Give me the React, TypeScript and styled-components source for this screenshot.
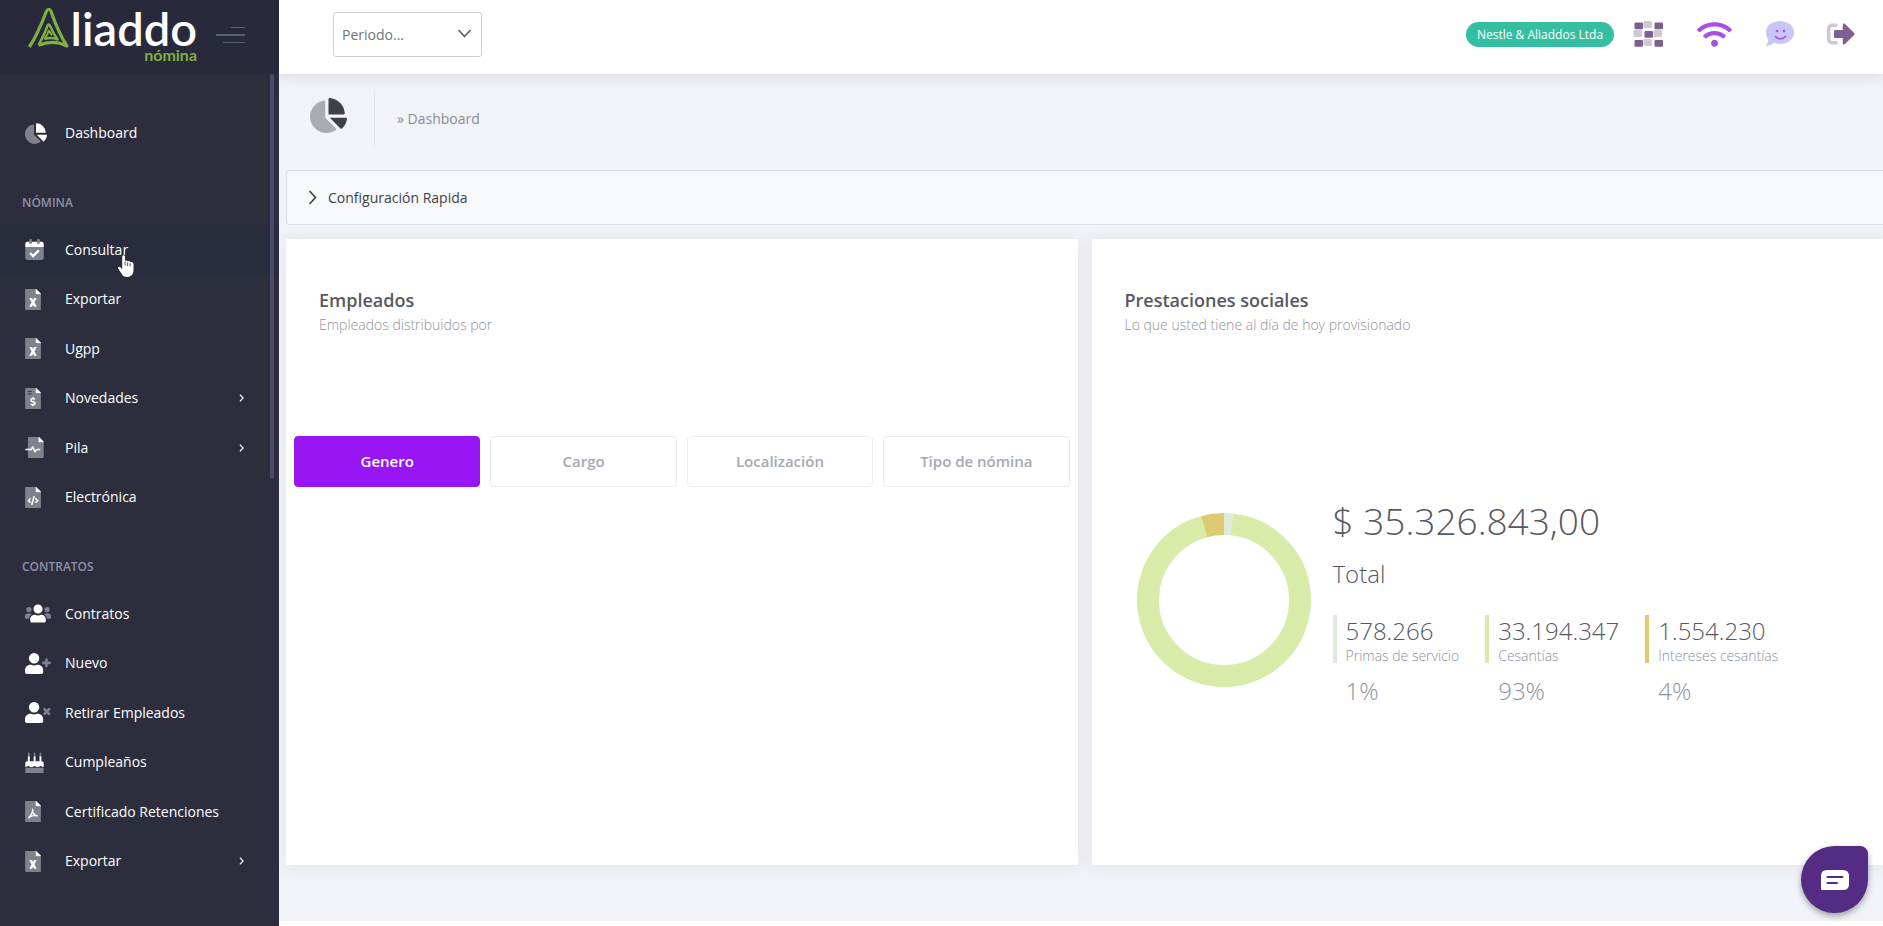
import React from "react";
import styled, { createGlobalStyle, css } from "styled-components";
import { FaCode, FaDollarSign, FaWifi } from "react-icons/fa";

const GlobalStyle = createGlobalStyle`
  *, *::before, *::after { box-sizing: border-box; }
  body {
    margin: 0;
    background: #f2f3f8;
    color: #575962;
    font-family: "Open Sans", "Noto Sans", sans-serif;
    font-size: 14px;
    line-height: 20px;
  }
  button, select { font-family: inherit; }
  ul { list-style: none; margin: 0; padding: 0; }
  h2, h3, p, dl, dd { margin: 0; font-weight: inherit; }
  a { color: inherit; text-decoration: none; }
`;

/* ---------- layout ---------- */

const Page = styled.div`
  display: grid;
  grid-template-columns: 279px minmax(0, 1fr);
  min-height: 100vh;
`;

const Sidebar = styled.aside`
  position: relative;
  display: flex;
  flex-direction: column;
  background: #2c2e3e;
  color: #fff;
`;

const Brand = styled.div`
  display: flex;
  align-items: flex-start;
  height: 74px;
  padding: 6px 34px 0 27px;
  background: #282a3c;
`;

const BrandLink = styled.a`
  display: flex;
  align-items: flex-start;
`;

const BrandText = styled.span`
  display: flex;
  flex-direction: column;
  align-items: flex-end;
  width: 127px;
  font-family: Lato, sans-serif;
`;

const BrandName = styled.span`
  font-size: 47px;
  line-height: 44px;
  font-weight: 600;
  color: #fff;
`;

const BrandProduct = styled.span`
  font-size: 16px;
  line-height: 10px;
  font-weight: 700;
  color: #7fae42;
`;

const MenuToggle = styled.button`
  display: flex;
  flex-direction: column;
  align-items: flex-end;
  gap: 6px;
  margin: 21px 0 0 auto;
  padding: 0;
  border: 0;
  background: none;
`;

const ToggleBar = styled.span<{ $width: number; $thick?: boolean }>`
  width: ${(p) => p.$width}px;
  height: ${(p) => (p.$thick ? 2 : 1)}px;
  background: #5d5f72;
`;

const ScrollThumb = styled.span`
  position: absolute;
  z-index: 1;
  top: 74px;
  right: 5px;
  width: 4px;
  height: 405px;
  border-radius: 4px;
  background: #4b4b68;
`;

const Nav = styled.nav`
  display: flex;
  flex-direction: column;
  padding-top: 34px;
`;

const NavSection = styled.h3`
  margin-top: 34px;
  padding: 2px 22px 0;
  height: 33px;
  font-size: 12px;
  line-height: 18px;
  font-weight: 600;
  color: #8d91a8;
`;

const NavList = styled.ul<{ $height: number }>`
  display: grid;
  grid-auto-rows: 1fr;
  height: ${(p) => p.$height}px;
`;

const NavItem = styled.li`
  position: relative;
  display: flex;
`;

const NavLink = styled.a<{ $active?: boolean }>`
  flex: 1;
  display: flex;
  align-items: center;
  padding: 0 35px 0 25px;
  color: #fff;
  ${(p) =>
    p.$active &&
    css`
      background: #292c3d;
    `}
`;

const NavIcon = styled.span`
  display: flex;
  width: 40px;
`;

const NavLabel = styled.span`
  flex: 1;
`;

const Pointer = styled.svg`
  position: absolute;
  left: 117px;
  top: 30px;
`;

const Main = styled.div`
  display: flex;
  flex-direction: column;
`;

const TopBar = styled.header`
  display: flex;
  justify-content: space-between;
  align-items: flex-start;
  height: 74px;
  padding: 12px 28px 0 54px;
  background: #fff;
  box-shadow: 0 1px 15px 1px rgba(69, 65, 78, 0.14);
`;

const PeriodBox = styled.div`
  position: relative;
  display: flex;
`;

const PeriodSelect = styled.select`
  appearance: none;
  width: 149px;
  height: 45px;
  padding: 0 8px;
  border: 1px solid #cdced2;
  border-radius: 3px;
  background: #fff;
  color: #6c757d;
  font-size: 14px;
`;

const PeriodArrow = styled.svg`
  position: absolute;
  right: 10px;
  top: 16px;
  pointer-events: none;
`;

const Tools = styled.div`
  display: flex;
  align-items: center;
  height: 44px;
`;

const Company = styled.span`
  margin-right: 19px;
  width: 148px;
  border-radius: 13px;
  background: #34bfa3;
  color: #fff;
  font-size: 12px;
  line-height: 25px;
  text-align: center;
`;

const ToolGroup = styled.div`
  display: flex;
  align-items: center;
  gap: 33px;
`;

const ToolButton = styled.button`
  display: flex;
  padding: 0;
  border: 0;
  background: none;
  color: #a94fe8;
`;

const SubHeader = styled.div`
  display: flex;
  align-items: center;
  padding: 17px 31px 24px;
`;

const SubIcon = styled.span`
  display: flex;
  width: 65px;
  height: 55px;
  padding-top: 7px;
  border-right: 1px solid #e4e5eb;
`;

const Crumb = styled.a`
  margin-left: 22px;
  color: #898b96;
`;

const Content = styled.main`
  padding: 0 0 56px 7px;
`;

const QuickConfig = styled.button`
  display: flex;
  align-items: center;
  gap: 11px;
  width: 100%;
  height: 55px;
  padding: 0 21px;
  border: 1px solid #dcdee6;
  border-right: 0;
  border-radius: 4px 0 0 4px;
  background: #f7f8fa;
  color: #3f4047;
  font-size: 14px;
  font-weight: 500;
`;

const Panels = styled.div`
  display: grid;
  grid-template-columns: 1fr 1fr;
  gap: 14px;
  margin-top: 14px;
  min-height: 626px;
`;

const Panel = styled.section`
  padding: 51px 8px 0;
  background: #fff;
  box-shadow: 0 1px 15px 1px rgba(69, 65, 78, 0.08);
`;

const PanelHead = styled.div`
  padding: 0 25px;
`;

const PanelTitle = styled.h2`
  font-size: 18px;
  line-height: 20px;
  font-weight: 600;
`;

const PanelNote = styled.p`
  margin-top: 5px;
  font-weight: 300;
  font-size: 14px;
  line-height: 20px;
  color: #8f929d;
`;

const Tabs = styled.div`
  display: grid;
  grid-template-columns: repeat(4, 1fr);
  gap: 10px;
  margin-top: 101px;
`;

const Tab = styled.button<{ $active?: boolean }>`
  height: 51px;
  padding: 0 0 2px;
  border: 1px solid ${(p) => (p.$active ? "#9816f4" : "#ebedf2")};
  border-radius: 4px;
  background: ${(p) => (p.$active ? "#9816f4" : "#fff")};
  color: ${(p) => (p.$active ? "#fff" : "#a6a8b3")};
  font-size: 15px;
  font-weight: 600;
`;

const Summary = styled.div`
  display: flex;
  align-items: center;
  gap: 22px;
  margin-top: 158px;
  padding-left: 37px;
`;

const SummaryBody = styled.div`
  display: flex;
  flex-direction: column;
  font-weight: 300;
`;

const Amount = styled.p`
  font-size: 37px;
  line-height: 56px;
`;

const AmountLabel = styled.p`
  margin-top: 5px;
  font-size: 24px;
  line-height: 40px;
`;

const Stats = styled.dl`
  display: flex;
  gap: 26px;
  margin-top: 21px;
`;

const Stat = styled.div`
  display: flex;
  flex-direction: column;
`;

const StatMain = styled.div<{ $color: string }>`
  display: flex;
  flex-direction: column-reverse;
  justify-content: flex-end;
  height: 48px;
  padding-left: 9px;
  border-left: 4px solid ${(p) => p.$color};
`;

const StatValue = styled.dd`
  font-size: 24px;
  line-height: 32px;
`;

const StatLabel = styled.dt`
  font-size: 14px;
  line-height: 18px;
  color: #8f929d;
`;

const StatShare = styled.dd`
  margin-top: 12px;
  padding-left: 13px;
  font-size: 24px;
  line-height: 32px;
  color: #8f929d;
`;

const Footer = styled.footer`
  flex: 1;
  min-height: 5px;
  background: #fff;
`;

const ChatButton = styled.button`
  position: fixed;
  right: 15px;
  bottom: 13px;
  display: flex;
  align-items: center;
  justify-content: center;
  width: 67px;
  height: 67px;
  padding: 0;
  border: 0;
  border-radius: 34px 8px 34px 34px;
  background: #552c84;
  box-shadow: 0 3px 6px rgba(0, 0, 0, 0.35);
`;

/* ---------- icons ---------- */

const SOFT = "#7f818c";

const Logo = () => (
  <svg width="43" height="42" viewBox="0 0 43 42" fill="none" stroke="#7fae42" strokeLinejoin="round" aria-hidden="true">
    <path d="M2.300 41C9 31 15 17 19.300 5.500q2.400-4.500 4.800 0C28 17 33.500 30 40 40 31 35.300 21 35.400 11.500 39.300" strokeWidth="3.200" />
    <path d="M11.500 39C15.500 32 18.500 25.500 20.300 20q1.400-3 2.800 0C25 25 27.300 29 30.500 33.500 26.500 31.600 22 31.700 17.500 33" strokeWidth="2.500" />
    <path d="M17.500 33C19.500 30 21 27.500 21.800 24.800 23 26.500 23.800 27.600 25.200 29" strokeWidth="2" />
  </svg>
);

const PIE_BODY =
  "M224 288V50.710c0-9.550-8.390-17.400-17.840-16.060C86.990 51.490-4.100 155.600.140 280.370 4.500 408.510 114.830 513.590 243.030 511.980c50.400-.630 96.970-16.870 135.260-44.030 7.900-5.600 8.420-17.230 1.570-24.080L224 288z";
const PIE_SLICES =
  "M527.790 288H290.500l158.030 158.030c6.040 6.040 15.980 6.530 22.190.680 38.700-36.460 65.320-85.610 73.130-140.860 1.340-9.460-6.510-17.850-16.060-17.850zM511.960 223.200C503.720 103.740 408.260 8.280 288.800.040 279.680-.590 272 7.100 272 16.240V240h223.770c9.140 0 16.820-7.680 16.190-16.800z";

const PieIcon = ({ size, body, slices }: { size: number; body: string; slices: string }) => (
  <svg height={size} width={Math.round((size * 544) / 512)} viewBox="0 0 544 512" aria-hidden="true">
    <path fill={body} d={PIE_BODY} />
    <path fill={slices} d={PIE_SLICES} />
  </svg>
);

const FileIcon = ({ children }: { children?: React.ReactNode }) => (
  <svg width="16" height="21" viewBox="0 0 384 512" fill="none" aria-hidden="true">
    <path fill={SOFT} d="M256 0H24C10.700 0 0 10.700 0 24v464c0 13.300 10.700 24 24 24h336c13.300 0 24-10.700 24-24V128H256z" />
    <path fill="#fff" d="M384 128H256V0c6 0 14 0 23 7l98 98c5 5 7 11 7 23z" />
    {children}
  </svg>
);

const ExcelIcon = () => (
  <FileIcon>
    <path fill="#fff" d="M100 222h68l24 54 24-54h68l-58 104 58 104h-68l-24-54-24 54h-68l58-104z" />
  </FileIcon>
);

const InvoiceIcon = () => (
  <FileIcon>
    <path stroke="#2c2e3e" strokeWidth="22" d="M64 84h96M64 146h96" />
    <FaDollarSign x="72" y="214" size="240" color="#fff" />
  </FileIcon>
);

const CodeIcon = () => (
  <FileIcon>
    <FaCode x="52" y="190" size="280" color="#fff" />
  </FileIcon>
);

const PdfIcon = () => (
  <FileIcon>
    <path stroke="#fff" strokeWidth="34" strokeLinecap="round" d="M184 200c8 70-22 130-92 210M184 250c16 60 50 104 110 112M112 386c50-26 110-36 180-26" />
  </FileIcon>
);

const PulseIcon = () => (
  <svg width="19" height="21" viewBox="0 0 448 512" fill="none" aria-hidden="true">
    <path fill={SOFT} d="M320 0H88C75 0 64 11 64 24v464c0 13 11 24 24 24h336c13 0 24-11 24-24V128H320z" />
    <path fill="#fff" d="M448 128H320V0c6 0 14 0 23 7l98 98c5 5 7 11 7 23z" />
    <path stroke="#fff" strokeWidth="34" strokeLinejoin="round" d="M0 304h144l36-64 56 124 42-60h88" />
  </svg>
);

const CalendarIcon = () => (
  <svg width="19" height="21" viewBox="0 0 448 512" fill="none" aria-hidden="true">
    <path fill={SOFT} d="M0 192h448v272c0 26-22 48-48 48H48c-26 0-48-22-48-48zM96 12q0-12 12-12h40q12 0 12 12v90H96zM288 12q0-12 12-12h40q12 0 12 12v90h-64z" />
    <path fill="#fff" d="M448 112v80H0v-80c0-26 22-48 48-48h48v48h64V64h128v48h64V64h48c26 0 48 22 48 48z" />
    <path stroke="#fff" strokeWidth="58" d="M118 344l72 72 140-138" />
  </svg>
);

const USER_BODY =
  "M224 256a128 128 0 1 0 0-256 128 128 0 1 0 0 256zM313.600 288h-16.700c-22.200 10.200-46.900 16-72.900 16s-50.600-5.800-72.900-16h-16.700C60.200 288 0 348.200 0 422.400V464c0 26.500 21.500 48 48 48h352c26.500 0 48-21.500 48-48v-41.600c0-74.200-60.200-134.400-134.400-134.400z";

const UserIcon = ({ mark }: { mark: string }) => (
  <svg width="26" height="21" viewBox="0 0 640 512" aria-hidden="true">
    <path fill="#fff" d={USER_BODY} />
    <path fill="none" stroke={SOFT} strokeWidth="64" strokeLinecap="round" d={mark} />
  </svg>
);

const UsersIcon = () => (
  <svg width="26" height="21" viewBox="0 0 640 512" aria-hidden="true">
    <path fill={SOFT} d="M96 224a64 64 0 1 0 0-128 64 64 0 1 0 0 128zM544 224a64 64 0 1 0 0-128 64 64 0 1 0 0 128zM576 256h-64c-17.600 0-33.500 7.100-45.100 18.600 40.300 22.100 68.900 62 75.100 109.400h66c17.700 0 32-14.300 32-32v-32c0-35.300-28.700-64-64-64zM173.100 274.600C161.500 263.100 145.600 256 128 256H64c-35.300 0-64 28.700-64 64v32c0 17.700 14.300 32 32 32h65.900c6.300-47.400 34.900-87.300 75.200-109.400z" />
    <path fill="#fff" d="M320 256c61.900 0 112-50.100 112-112S381.900 32 320 32 208 82.100 208 144s50.100 112 112 112zm76.800 32h-8.300c-20.800 10-43.900 16-68.500 16s-47.600-6-68.500-16h-8.300C179.600 288 128 339.600 128 403.200V432c0 26.500 21.500 48 48 48h288c26.500 0 48-21.500 48-48v-28.800c0-63.600-51.600-115.200-115.200-115.200z" />
  </svg>
);

const CakeIcon = () => (
  <svg width="19" height="21" viewBox="0 0 448 512" aria-hidden="true">
    <path fill={SOFT} d="M0 384h448v128H0zM82 0q26 40 26 70v60H66V70q-8-30 16-70zM222 0q26 40 26 70v60h-42V70q-8-30 16-70zM362 0q26 40 26 70v60h-42V70q-8-30 16-70z" />
    <path fill="#fff" d="M62 112h46v112h96V112h46v112h96V112h46v112h8c27 0 48 22 48 48v96c-36 0-44-28-75-28s-38 32-75 32-44-32-74-32-38 32-75 32-44-32-75-32-40 28-74 28v-96c0-26 22-48 48-48h13z" />
  </svg>
);

const ChevronRight = ({ size, width, color }: { size: number; width: number; color: string }) => (
  <svg width={Math.round(size * 0.6)} height={size} viewBox="0 0 6 10" fill="none" aria-hidden="true">
    <path d="M1 0.700l4 4.300-4 4.300" stroke={color} strokeWidth={width} />
  </svg>
);

const strongCells = [[1.5, 1.5], [21.5, 1.5], [11.5, 10], [1.5, 19], [21.5, 19]];
const softCells = [[10.5, 0], [0.5, 9], [20.5, 9], [10.5, 18]];

const GridIcon = () => (
  <svg width="31" height="26" viewBox="0 0 31 26" aria-hidden="true">
    {softCells.map(([x, y]) => (
      <rect key={`${x}-${y}`} x={x} y={y} width="8.500" height="7" rx="1.500" fill="#cdc9d2" />
    ))}
    {strongCells.map(([x, y]) => (
      <rect key={`${x}-${y}`} x={x} y={y} width="8.500" height="6.700" rx="1" fill="#7f5f92" />
    ))}
  </svg>
);

const SmileIcon = () => (
  <svg width="29" height="26" viewBox="0 0 29 26" fill="none" aria-hidden="true">
    <path fill="#c8c5f8" d="M15 0c8 0 14 5 14 11.500S23 23 15 23c-2 0-4-.4-6-1.200C6.500 24 3.500 25 .5 25c1.600-2 2.700-4 3-6.500C1.800 16.500 1 14 1 11.500 1 5 7 0 15 0z" />
    <circle cx="12" cy="10" r="1.300" fill="#a94fe8" />
    <circle cx="19" cy="10" r="1.300" fill="#a94fe8" />
    <path d="M10.500 15.500c2.500 3.200 7.500 3.200 10 0" stroke="#a94fe8" strokeWidth="1.600" strokeLinecap="round" />
  </svg>
);

const ExitIcon = () => (
  <svg width="28" height="28" viewBox="0 0 512 512" aria-hidden="true">
    <path fill="#cdc9d2" d="M192 436v-40c0-6.600-5.400-12-12-12H96c-17.700 0-32-14.300-32-32V160c0-17.700 14.300-32 32-32h84c6.600 0 12-5.400 12-12V76c0-6.600-5.400-12-12-12H96c-53 0-96 43-96 96v192c0 53 43 96 96 96h84c6.600 0 12-5.400 12-12z" />
    <path fill="#7f5f92" d="M497 273L329 441c-15 15-41 4.500-41-17v-96H152c-13.300 0-24-10.700-24-24v-96c0-13.300 10.700-24 24-24h136V88c0-21.400 25.900-32 41-17l168 168c9.300 9.400 9.300 24.600 0 34z" />
  </svg>
);

const HandPointer = () => (
  <Pointer width="18" height="23" viewBox="0 0 18 23" aria-hidden="true">
    <path
      d="M5.200 1.800c0-2 2.800-2 2.800 0v4.200c.8-.8 2.300-.5 2.600.4.900-.6 2.200-.2 2.500.7 1.300-.5 3.400.2 3.400 1.900v6c0 4-2.400 7-6.400 7-3.200 0-4.600-1.400-5.900-4L1.200 13.800c-.7-1.800 1.300-2.600 2.400-1.300l1.600 1.800z"
      fill="#fff"
    />
    <path d="M8 6.500v4M10.600 7.500v3.500M13.100 8.200v3" stroke="#1c1d28" strokeWidth="0.800" />
  </Pointer>
);

/* ---------- data ---------- */

type Entry = { label: string; icon: React.ReactNode; expandable?: boolean; active?: boolean };

const payroll: Entry[] = [
  { label: "Consultar", icon: <CalendarIcon />, active: true },
  { label: "Exportar", icon: <ExcelIcon /> },
  { label: "Ugpp", icon: <ExcelIcon /> },
  { label: "Novedades", icon: <InvoiceIcon />, expandable: true },
  { label: "Pila", icon: <PulseIcon />, expandable: true },
  { label: "Electrónica", icon: <CodeIcon /> },
];

const contracts: Entry[] = [
  { label: "Contratos", icon: <UsersIcon /> },
  { label: "Nuevo", icon: <UserIcon mark="M528 160v160M448 240h160" /> },
  { label: "Retirar Empleados", icon: <UserIcon mark="M480 176l112 112M592 176l-112 112" /> },
  { label: "Cumpleaños", icon: <CakeIcon /> },
  { label: "Certificado Retenciones", icon: <PdfIcon /> },
  { label: "Exportar", icon: <ExcelIcon />, expandable: true },
];

const benefits = [
  { label: "Primas de servicio", value: "578.266", amount: 578266, share: "1%", color: "#deebdc" },
  { label: "Cesantías", value: "33.194.347", amount: 33194347, share: "93%", color: "#d8eba8" },
  { label: "Intereses cesantías", value: "1.554.230", amount: 1554230, share: "4%", color: "#dccb70" },
];

const filters = ["Genero", "Cargo", "Localización", "Tipo de nómina"];

const Donut = () => {
  const total = benefits.reduce((sum, b) => sum + b.amount, 0);
  const r = 76;
  const length = 2 * Math.PI * r;
  let start = 0;
  return (
    <svg width="174" height="174" viewBox="0 0 174 174" role="img" aria-label="Prestaciones sociales">
      <g transform="rotate(-90 87 87)" fill="none" strokeWidth="22">
        {benefits.map((b) => {
          const part = (b.amount / total) * length;
          const offset = -start;
          start += part;
          return <circle key={b.label} cx="87" cy="87" r={r} stroke={b.color} strokeDasharray={`${part} ${length - part}`} strokeDashoffset={offset} />;
        })}
      </g>
    </svg>
  );
};

const Entries = ({ items }: { items: Entry[] }) => (
  <NavList $height={297}>
    {items.map((item) => (
      <NavItem key={item.label}>
        <NavLink href="#" $active={item.active}>
          <NavIcon>{item.icon}</NavIcon>
          <NavLabel>{item.label}</NavLabel>
          {item.expandable && <ChevronRight size={8} width={1.5} color="#fff" />}
        </NavLink>
        {item.active && <HandPointer />}
      </NavItem>
    ))}
  </NavList>
);

export default function App() {
  return (
    <>
      <GlobalStyle />
      <Page>
        <Sidebar>
          <Brand>
            <BrandLink href="#" aria-label="Aliaddo nómina">
              <Logo />
              <BrandText>
                <BrandName>liaddo</BrandName>
                <BrandProduct>nómina</BrandProduct>
              </BrandText>
            </BrandLink>
            <MenuToggle type="button" aria-label="Contraer menú">
              <ToggleBar $width={14} />
              <ToggleBar $width={29} $thick />
              <ToggleBar $width={22} />
            </MenuToggle>
          </Brand>
          <ScrollThumb />
          <Nav>
            <NavList $height={50}>
              <NavItem>
                <NavLink href="#">
                  <NavIcon>
                    <PieIcon size={21} body={SOFT} slices="#fff" />
                  </NavIcon>
                  <NavLabel>Dashboard</NavLabel>
                </NavLink>
              </NavItem>
            </NavList>
            <NavSection>NÓMINA</NavSection>
            <Entries items={payroll} />
            <NavSection>CONTRATOS</NavSection>
            <Entries items={contracts} />
          </Nav>
        </Sidebar>

        <Main>
          <TopBar>
            <PeriodBox>
              <PeriodSelect aria-label="Periodo" defaultValue="">
                <option value="">Periodo...</option>
              </PeriodSelect>
              <PeriodArrow width="15" height="11" viewBox="0 0 15 11" fill="none">
                <path d="M1.500 2l6 6.500 6-6.500" stroke="#5b6470" strokeWidth="1.700" />
              </PeriodArrow>
            </PeriodBox>
            <Tools>
              <Company>Nestle &amp; Aliaddos Ltda</Company>
              <ToolGroup>
                <ToolButton type="button" aria-label="Aplicaciones">
                  <GridIcon />
                </ToolButton>
                <ToolButton type="button" aria-label="Conexión">
                  <FaWifi size={35} />
                </ToolButton>
                <ToolButton type="button" aria-label="Soporte">
                  <SmileIcon />
                </ToolButton>
                <ToolButton type="button" aria-label="Salir">
                  <ExitIcon />
                </ToolButton>
              </ToolGroup>
            </Tools>
          </TopBar>

          <SubHeader>
            <SubIcon>
              <PieIcon size={35} body="#abacb1" slices="#3f4149" />
            </SubIcon>
            <Crumb href="#">» Dashboard</Crumb>
          </SubHeader>

          <Content>
            <QuickConfig type="button">
              <ChevronRight size={15} width={1.1} color="#3f4047" />
              Configuración Rapida
            </QuickConfig>
            <Panels>
              <Panel>
                <PanelHead>
                  <PanelTitle>Empleados</PanelTitle>
                  <PanelNote>Empleados distribuidos por</PanelNote>
                </PanelHead>
                <Tabs>
                  {filters.map((name, i) => (
                    <Tab key={name} type="button" $active={i === 0}>
                      {name}
                    </Tab>
                  ))}
                </Tabs>
              </Panel>
              <Panel>
                <PanelHead>
                  <PanelTitle>Prestaciones sociales</PanelTitle>
                  <PanelNote>Lo que usted tiene al día de hoy provisionado</PanelNote>
                </PanelHead>
                <Summary>
                  <Donut />
                  <SummaryBody>
                    <Amount>$ 35.326.843,00</Amount>
                    <AmountLabel>Total</AmountLabel>
                    <Stats>
                      {benefits.map((b) => (
                        <Stat key={b.label}>
                          <StatMain $color={b.color}>
                            <StatLabel>{b.label}</StatLabel>
                            <StatValue>{b.value}</StatValue>
                          </StatMain>
                          <StatShare>{b.share}</StatShare>
                        </Stat>
                      ))}
                    </Stats>
                  </SummaryBody>
                </Summary>
              </Panel>
            </Panels>
          </Content>
          <Footer />
        </Main>
      </Page>
      <ChatButton type="button" aria-label="Chat">
        <svg width="28" height="20" viewBox="0 0 28 20" aria-hidden="true">
          <path fill="#fff" d="M6 0h16q6 0 6 6v8q0 6-6 6H0V6q0-6 6-6z" />
          <path stroke="#552c84" strokeWidth="2" strokeLinecap="round" d="M6.500 7h15M6.500 13h9.500" />
        </svg>
      </ChatButton>
    </>
  );
}
